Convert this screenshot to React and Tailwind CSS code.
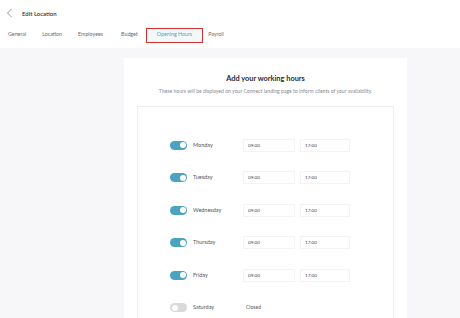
import React from "react";

const tabs = ["General", "Location", "Employees", "Budget", "Opening Hours", "Payroll"];

const days = [
  { name: "Monday", on: true },
  { name: "Tuesday", on: true },
  { name: "Wednesday", on: true },
  { name: "Thursday", on: true },
  { name: "Friday", on: true },
  { name: "Saturday", on: false },
];

const Toggle = ({ on }) => (
  <div
    className={
      "w-[17px] h-[9px] rounded-full flex items-center px-[1.5px] " +
      (on ? "bg-[#4ba3bf] justify-end" : "bg-[#d9d9dc] justify-start")
    }
  >
    <div className="w-[6px] h-[6px] rounded-full bg-white" />
  </div>
);

const App = () => {
  return (
    <div className="w-[460px] h-[318px] overflow-hidden bg-[#f7f7f9] font-['Lato',sans-serif]">
      <div className="bg-white h-[48px] flex flex-col">
        <div className="flex items-center h-[26px] pl-[6px]">
          <svg width="8" height="10" viewBox="0 0 8 10" className="mr-[8px]">
            <path d="M5.5 1 L1.5 5 L5.5 9" stroke="#8a8a8f" strokeWidth="0.9" fill="none" />
          </svg>
          <span className="text-[6px] text-[#333] font-semibold">Edit Location</span>
        </div>
        <div className="flex items-center h-[18px] pl-[8px] text-[5.3px] text-[#6b6b70]">
          {tabs.map((t) => (
            <div
              key={t}
              className={
                t === "Opening Hours"
                  ? "mr-[5px] -ml-[4px] border-[1.5px] border-[#d32f2f] px-[10px] h-[15px] flex items-center text-[#4ba3bf] bg-[#f3f9fb]"
                  : t === "General"
                  ? "mr-[16px]"
                  : t === "Location"
                  ? "mr-[16px]"
                  : t === "Employees"
                  ? "mr-[18px]"
                  : "mr-[12px]"
              }
            >
              {t}
            </div>
          ))}
        </div>
      </div>

      <div className="ml-[124px] mt-[10px] w-[283px] bg-white flex flex-col items-center pt-[15px]">
        <h2 className="text-[7.4px] font-bold text-[#2b2b2e]">Add your working hours</h2>
        <p className="mt-[4px] text-[5.1px] text-[#8a8a90]">
          These hours will be displayed on your Connect landing page to inform clients of your availability.
        </p>

        <div className="mt-[10px] self-start ml-[13px] w-[257px] border border-[#eeeef1] pt-[22px] pb-[10px]">
          {days.map((d) => (
            <div key={d.name} className="flex items-center h-[32.5px] pl-[32px]">
              <Toggle on={d.on} />
              <span className="ml-[6px] w-[50px] text-[5.5px] text-[#55555a]">{d.name}</span>
              {d.on ? (
                <>
                  <div className="w-[52px] h-[13px] border border-[#f4f4f6] flex items-center pl-[4px] text-[4.6px] text-[#444]">
                    09:00
                  </div>
                  <div className="ml-[5px] w-[50px] h-[13px] border border-[#f4f4f6] flex items-center pl-[4px] text-[4.6px] text-[#444]">
                    17:00
                  </div>
                </>
              ) : (
                <span className="ml-[3px] text-[5px] text-[#55555a]">Closed</span>
              )}
            </div>
          ))}
        </div>
      </div>
    </div>
  );
};

export default App;
